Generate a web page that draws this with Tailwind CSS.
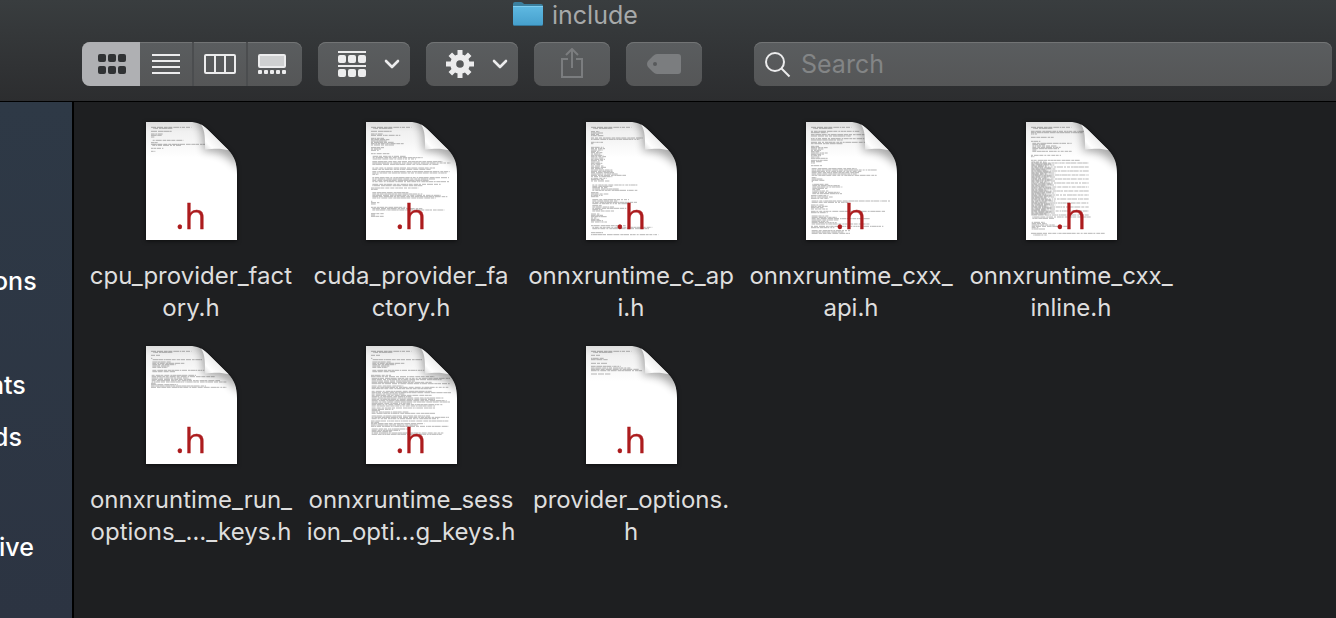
<!DOCTYPE html>
<html lang="en">
<head>
<meta charset="utf-8">
<title>include</title>
<script src="https://cdn.jsdelivr.net/npm/@tailwindcss/browser@4"></script>
</head>
<body class="flex min-h-screen flex-col overflow-x-hidden bg-[#1e1f21] font-[Inter,sans-serif]">
<header class="border-b border-black bg-linear-to-b from-[#393d3f] to-[#2c2d2f] pb-[15px]">
  <div class="flex h-[30px] items-center gap-2 pl-[513px]">
    <svg class="h-[26px] w-[31px] shrink-0" viewBox="0 0 31 26" aria-hidden="true">
      <defs><linearGradient id="fold" x1="0" y1="0" x2="0" y2="1"><stop offset="0" stop-color="#5fb9e2"/><stop offset="1" stop-color="#459fcc"/></linearGradient></defs>
      <path d="M0 5V2Q0 0 2 0H8Q9.500 0 10.500 1.500Q11 2 12.500 2H28Q30 2 30 4V8H0Z" fill="#3b7f9e"/>
      <path d="M0 4H30V22Q30 24 28 24H2Q0 24 0 22Z" fill="url(#fold)"/>
      <path d="M0 4.500H30" stroke="#7fcdf0"/><path d="M1 23.500H29" stroke="#34779a"/>
    </svg>
    <h1 class="text-[25px] leading-[30px] text-[#a7a9aa]">include</h1>
  </div>
  <div class="mt-3 flex items-center gap-4 pr-1 pl-[82px]">
    <div class="flex h-11 shrink-0 overflow-hidden rounded-lg bg-linear-to-b from-[#5a5d5f] to-[#555657] inset-shadow-[0_1px_0_#727475]">
      <button aria-label="Icon view" class="flex w-[58px] items-center justify-center bg-[#afb0b3] pl-0.5">
        <svg class="h-5 w-7" viewBox="0 0 28 20" fill="#303234"><rect width="8" height="8" rx="2"/><rect x="10" width="8" height="8" rx="2"/><rect x="20" width="8" height="8" rx="2"/><rect y="12" width="8" height="8" rx="2"/><rect x="10" y="12" width="8" height="8" rx="2"/><rect x="20" y="12" width="8" height="8" rx="2"/></svg>
      </button>
      <button aria-label="List view" class="flex w-[54px] items-center justify-center border-r-2 border-[#4b4d4f]">
        <svg class="h-5 w-7" viewBox="0 0 28 20" fill="#ececed"><path d="M0 0h28v2H0zM0 6h28v2H0zM0 12h28v2H0zM0 18h28v2H0z"/></svg>
      </button>
      <button aria-label="Column view" class="flex w-[54px] items-center justify-center border-r-2 border-[#4b4d4f]">
        <svg class="h-5 w-8" viewBox="0 0 32 20" fill="none" stroke="#ececed" stroke-width="2"><rect x="1" y="1" width="30" height="18" rx="1"/><path d="M11 1v18M21 1v18"/></svg>
      </button>
      <button aria-label="Gallery view" class="flex w-[54px] items-center justify-center pr-1.5">
        <svg class="h-5 w-7" viewBox="0 0 28 20" fill="#ececed"><rect x="1" y="1" width="26" height="12" rx="1" fill="#cfd0d1" stroke="#ececed" stroke-width="2"/><rect y="16" width="4" height="4" rx="1"/><rect x="6" y="16" width="4" height="4" rx="1"/><rect x="12" y="16" width="4" height="4" rx="1"/><rect x="18" y="16" width="4" height="4" rx="1"/><rect x="24" y="16" width="4" height="4" rx="1"/></svg>
      </button>
    </div>
    <button aria-label="Group items" class="flex h-11 w-[92px] shrink-0 items-center justify-between rounded-lg bg-linear-to-b from-[#5a5d5f] to-[#555657] pr-[10px] pl-5 inset-shadow-[0_1px_0_#727475]">
      <svg class="h-[26px] w-7" viewBox="0 0 28 26" fill="#ececed"><path d="M0 0h28v2H0zM0 14h28v2H0z"/><rect y="4" width="8" height="8" rx="2"/><rect x="10" y="4" width="8" height="8" rx="2"/><rect x="20" y="4" width="8" height="8" rx="2"/><rect y="18" width="8" height="8" rx="2"/><rect x="10" y="18" width="8" height="8" rx="2"/><rect x="20" y="18" width="8" height="8" rx="2"/></svg>
      <svg class="h-[10px] w-4" viewBox="0 0 16 10" fill="none" stroke="#ececed" stroke-width="2.600" stroke-linecap="round" stroke-linejoin="round"><path d="M2 2l6 6 6-6"/></svg>
    </button>
    <button aria-label="Actions" class="flex h-11 w-[92px] shrink-0 items-center justify-between rounded-lg bg-linear-to-b from-[#5a5d5f] to-[#555657] pr-[10px] pl-5 inset-shadow-[0_1px_0_#727475]">
      <svg class="size-7" viewBox="-14 -14 28 28" fill="none" stroke="#ececed"><circle r="6.800" stroke-width="6"/><path stroke-width="5" d="M0-14v5M0 14v-5M-14 0h5M14 0h-5M-9.700-9.700l3.500 3.500M9.700 9.700l-3.500-3.500M9.700-9.700l-3.500 3.500M-9.700 9.700l3.500-3.500"/></svg>
      <svg class="h-[10px] w-4" viewBox="0 0 16 10" fill="none" stroke="#ececed" stroke-width="2.600" stroke-linecap="round" stroke-linejoin="round"><path d="M2 2l6 6 6-6"/></svg>
    </button>
    <button aria-label="Share" class="flex h-11 w-[76px] shrink-0 items-center justify-center rounded-lg bg-linear-to-b from-[#5a5d5f] to-[#555657] pb-0.5 inset-shadow-[0_1px_0_#727475]">
      <svg class="h-[30px] w-[22px]" viewBox="0 0 22 30" fill="none" stroke="#7b7d7f" stroke-width="2"><path d="M7 11H1v18h20V11h-6M11 20V1M5 7l6-6 6 6"/></svg>
    </button>
    <button aria-label="Edit tags" class="flex h-11 w-[76px] shrink-0 items-center justify-center rounded-lg bg-linear-to-b from-[#5a5d5f] to-[#555657] inset-shadow-[0_1px_0_#727475]">
      <svg class="h-5 w-[34px]" viewBox="0 0 34 20" fill="#7b7d7f"><path fill-rule="evenodd" d="M10 0H31Q34 0 34 3V17Q34 20 31 20H10Q8 20 6 18L1 13Q-1 10 1 7L6 2Q8 0 10 0ZM8 8a2 2 0 1 0 0 4a2 2 0 1 0 0-4Z"/></svg>
    </button>
    <label class="ml-9 flex h-11 min-w-0 flex-1 items-center gap-[10px] rounded-lg bg-linear-to-b from-[#5a5d5f] to-[#555657] pt-0.5 pl-[11px] inset-shadow-[0_1px_0_#727475]">
      <svg class="size-[26px] shrink-0" viewBox="0 0 26 26" fill="none" stroke="#ececed" stroke-width="2"><circle cx="10" cy="10" r="9"/><path d="M16.500 16.500l8 8"/></svg>
      <input type="search" aria-label="Search" placeholder="Search" class="min-w-0 flex-1 bg-transparent text-[25px] text-white outline-none placeholder:text-[#838586]">
    </label>
  </div>
</header>
<div class="flex flex-1">
  <nav aria-label="Sidebar" class="w-[74px] shrink-0 overflow-hidden border-r-2 border-black bg-linear-to-b from-[#2e3946] to-[#2c3442] pt-[153px] text-[25px] leading-[52px] font-medium text-white">
    <a href="#" class="-ml-[7px] block">ons</a>
    <a href="#" class="mt-[52px] -ml-[11px] block">nts</a>
    <a href="#" class="-ml-[7px] block">ds</a>
    <a href="#" class="mt-[58px] -ml-[11px] block">rive</a>
  </nav>
  <main id="files" class="grid flex-1 grid-cols-[repeat(auto-fill,220px)] content-start gap-y-[22px] pt-5 pl-[7px]"></main>
</div>

<svg class="absolute size-0" aria-hidden="true">
  <defs>
    <linearGradient id="paper" x1="0" y1="0" x2="0" y2="1"><stop offset="0" stop-color="#dedede"/><stop offset=".08" stop-color="#f0f0f0"/><stop offset=".3" stop-color="#fff"/></linearGradient>
    <linearGradient id="curl" gradientUnits="userSpaceOnUse" x1="224" y1="120" x2="262" y2="84"><stop offset="0" stop-color="#dcdcdc"/><stop offset=".4" stop-color="#fff"/><stop offset="1" stop-color="#ececec"/></linearGradient>
    <filter id="soft" x="-50%" y="-50%" width="200%" height="200%"><feGaussianBlur stdDeviation="12"/></filter>
    <clipPath id="sheet"><path d="M48 36H178C202 36 215 42 232 58L294 119C313 138 321 160 321 192V390H48Z"/></clipPath>
    <g id="page"><path d="M48 36H178C202 36 215 42 232 58L294 119C313 138 321 160 321 192V390H48Z" fill="url(#paper)"/>
      <g clip-path="url(#sheet)"><path d="M196 26Q222 66 220 124Q280 118 330 180V70L240 20Z" fill="#000" opacity=".32" filter="url(#soft)"/></g></g>
    <path id="corner" d="M212 43C222 55 226 72 225 119C254 115 276 115 296 121L232 58Q222 48 212 43Z" fill="url(#curl)"/>
  </defs>
</svg>
<script>
// Each row of a preview is [y, x, width], in thirds of a pixel.
const head = [[52,63,121],[55,70,60]];
// Evenly spaced rows whose widths repeat in turn.
const run = (y0, y1, x, ws, step = 4) => {
  const out = [];
  for (let y = y0, i = 0; y <= y1; y += step, i++) out.push([y, x, ws[i % ws.length]]);
  return out;
};
// Splits a row into word-length strokes with narrow gaps.
const words = ([y, x, w]) => {
  let d = '', at = 0, seed = y * 31 + w * 7;
  while (at < w) {
    seed = (seed * 1103 + 12345) % 65521;
    const len = Math.min(4 + seed % 15, w - at);
    d += `M${x + at} ${y}h${len}`;
    at += len + 1 + seed % 3;
  }
  return d;
};
const optHead = [...head,[64,63,27],[73,63,4],[77,68,148],...run(84,102,67,[55,96,70,52,45]),[109,67,156],[113,67,68]];
const files = [
  { name: ['cpu_provider_fact','ory.h'], rows: [...head,[64,63,62],[72,63,38],[76,63,33],[81,63,10],[91,68,92],[98,63,20],[103,63,162],[106,67,86],[115,63,37],[124,63,13]] },
  { name: ['cuda_provider_fa','ctory.h'], rows: [...head,[64,63,62],...run(72,79,63,[38,88]),...run(85,108,63,[40,55,50,70,98,70]),...run(113,124,63,[42,30,24]),[131,63,55],...run(139,150,68,[100,150,130]),...run(155,165,67,[210,235,200]),...run(174,180,67,[188,175]),...run(185,196,67,[232,225,18]),...run(203,215,67,[230,190,170]),...run(223,229,67,[205,150]),...run(234,241,63,[143,20]),...run(248,267,67,[110,150,205,225,190]),[274,63,4],...run(278,284,63,[25,14]),[292,63,107],...run(296,303,67,[150,216]),...run(311,319,63,[38,12])] },
  { name: ['onnxruntime_c_ap','i.h'], rows: [...head,...run(65,77,63,[25,38]),...run(84,91,63,[155,145]),...run(97,101,63,[36,8]),...run(112,176,63,[38,42,36,26,34,28,38,45]),...run(180,200,63,[64,65,70,80,105]),...run(205,214,63,[48,38,55]),...run(225,242,67,[135,60,45,80]),...run(248,263,63,[22,52,35]),...run(269,281,67,[110,75,135]),...run(287,304,67,[30,65,102]),...run(312,338,63,[25,36,48,16]),[347,63,105],...run(352,358,67,[180,170]),[368,63,36],[374,63,202]] },
  { name: ['onnxruntime_cxx_','api.h'], rows: [...head,...run(64,68,63,[145,50]),...run(74,80,63,[162,120]),...run(86,90,63,[160,95]),...run(97,103,63,[162,95]),...run(109,148,63,[25,50,38,30]),...run(151,161,63,[50,32,12]),[167,63,33],...run(176,196,65,[135,195,150,142]),...run(203,216,65,[14,35,40,4]),...run(223,252,67,[48,82,90,45,25]),...run(257,266,63,[52,65]),...run(273,279,65,[235,110]),...run(285,297,63,[38,50]),...run(304,310,63,[222,50]),...run(318,342,65,[50,75,175,80]),...run(349,353,63,[218,70]),...run(362,371,65,[115,95])] },
  { name: ['onnxruntime_cxx_','inline.h'], rows: [...head,...run(64,74,63,[162,155,18]),...run(82,85,63,[70,105]),[94,63,28],...run(100,126,67,[118,40,72,85,80,12]),...run(136,143,63,[90,10]),[151,63,146],...run(156,315,64,[45,172,60,72],3),...run(321,327,67,[175,65]),...run(337,360,65,[40,45,70,115,20]),[370,63,221],[375,70,40]] },
  { name: ['onnxruntime_run_','options_…_keys.h'], rows: [...optHead,...run(124,144,65,[133,190,110,120,205,225]),...run(148,163,63,[15,80,165,226])] },
  { name: ['onnxruntime_sess','ion_opti…g_keys.h'], rows: [...optHead,...run(124,130,63,[60,190]),...run(133,150,65,[235,210,130,180]),...run(156,166,65,[95,230,180]),...run(172,184,65,[180,238,100]),...run(188,218,65,[120,215,190,225,235]),...run(222,240,65,[190,65,25,110]),...run(246,257,65,[175,232,200]),...run(261,278,63,[232,25,160,140]),...run(285,304,65,[110,85,60,215,212])] },
  { name: ['provider_options.','h'], rows: [...head,[64,63,27],...run(73,79,63,[38,50]),[88,63,48],[97,63,90],...run(102,112,63,[118,143,153]),[120,63,58]] },
];
document.getElementById('files').innerHTML = files.map(f => {
  return `<figure class="flex flex-col items-center">
    <svg class="h-[118px] w-[91px] drop-shadow-[0_1px_2px_rgba(0,0,0,0.6)]" viewBox="48 36 273 354" role="img" aria-label="Header file">
      <use href="#page"/>
      <path d="${f.rows.map(words).join('')}" stroke="#222" stroke-opacity=".55" stroke-width="1.800" fill="none"/>
      <use href="#corner"/>
      <text x="182" y="357" text-anchor="middle" font-family="Open Sans, sans-serif" font-size="106" fill="#ac1c1e" stroke="#ac1c1e">.h</text>
    </svg>
    <figcaption class="mt-5 text-center text-[24px] leading-8 whitespace-nowrap text-[#dedede]">${f.name.join('<br>')}</figcaption>
  </figure>`;
}).join('');
</script>
</body>
</html>
